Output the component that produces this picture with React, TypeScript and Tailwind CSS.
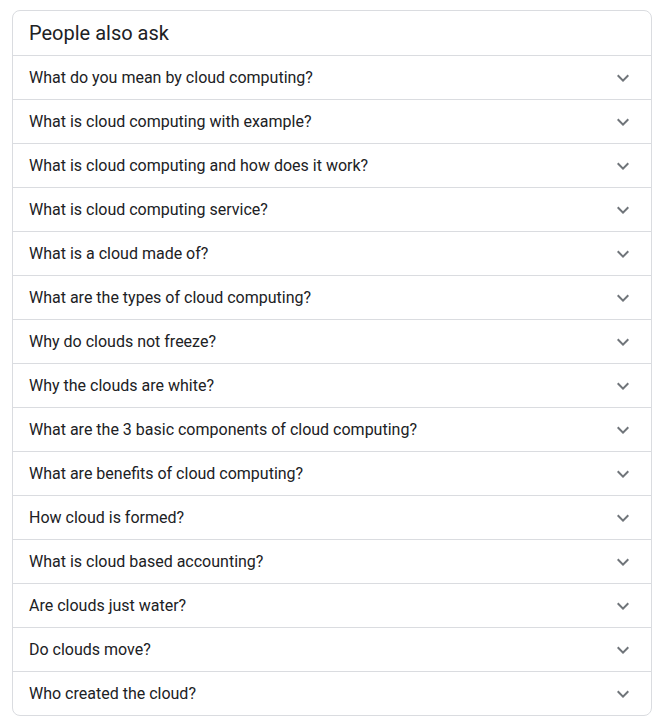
const QUESTIONS = [
  'What do you mean by cloud computing?',
  'What is cloud computing with example?',
  'What is cloud computing and how does it work?',
  'What is cloud computing service?',
  'What is a cloud made of?',
  'What are the types of cloud computing?',
  'Why do clouds not freeze?',
  'Why the clouds are white?',
  'What are the 3 basic components of cloud computing?',
  'What are benefits of cloud computing?',
  'How cloud is formed?',
  'What is cloud based accounting?',
  'Are clouds just water?',
  'Do clouds move?',
  'Who created the cloud?',
];

function ExpandMore() {
  return (
    <svg viewBox="0 0 24 24" className="w-6 h-6 fill-[#70757a]">
      <path d="M16.59 8.59L12 13.17 7.41 8.59 6 10l6 6 6-6z" />
    </svg>
  );
}

export default function App() {
  return (
    <div className="bg-white min-h-screen pt-[10px] pl-[12px] font-['Roboto','Liberation_Sans',sans-serif]">
      <div className="w-[640px] border border-[#dadce0] rounded-lg overflow-hidden">
        {/* header */}
        <div className="h-[44px] flex items-center px-4">
          <h2 className="text-[20px] text-[#202124] leading-none">People also ask</h2>
        </div>

        {QUESTIONS.map(q => (
          <div
            key={q}
            className="h-[44px] border-t border-[#dadce0] flex items-center justify-between pl-4 pr-4 cursor-pointer"
          >
            <span className="text-[16px] text-[#202124] leading-none">{q}</span>
            <ExpandMore />
          </div>
        ))}
      </div>
    </div>
  );
}
